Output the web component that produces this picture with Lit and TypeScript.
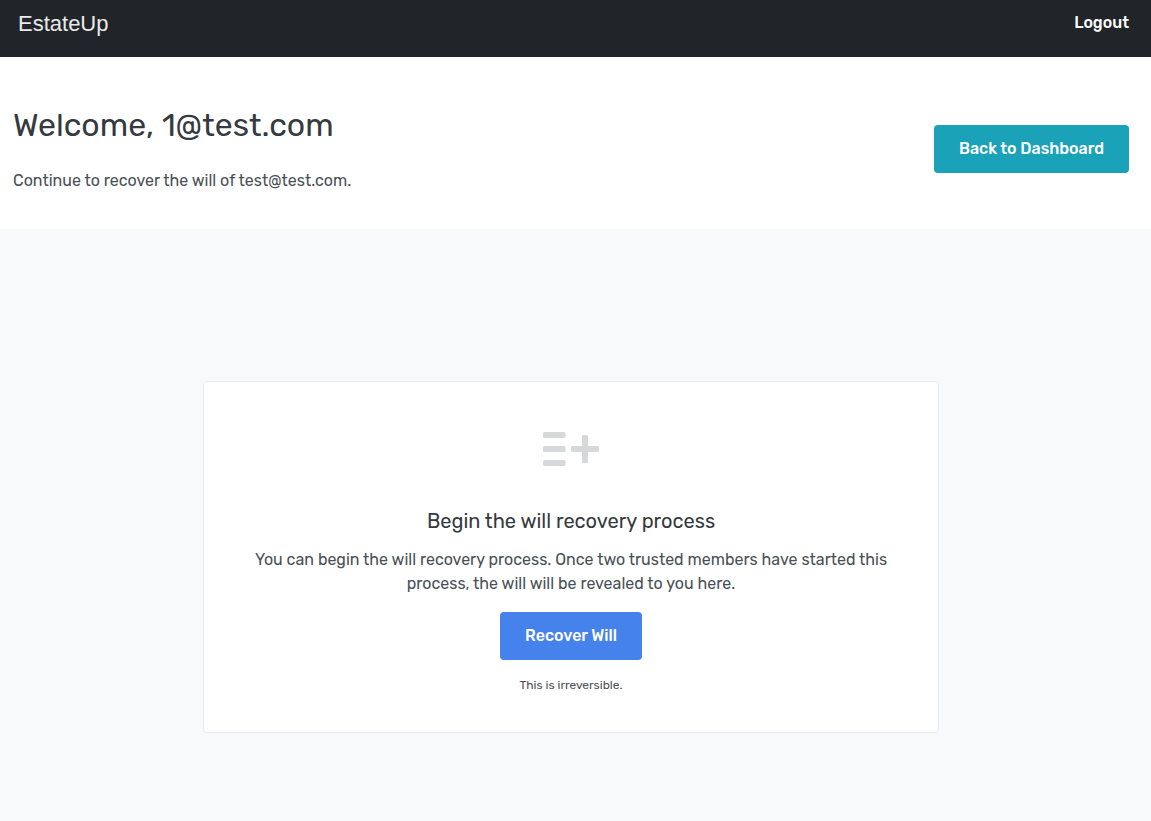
import { LitElement, html, css } from "lit";
import { customElement, property } from "lit/decorators.js";

@customElement("app-root")
export class AppRoot extends LitElement {
  @property() user = "1@test.com";
  @property() owner = "test@test.com";

  static styles = css`
    :host {
      display: flex;
      flex-direction: column;
      min-height: 100vh;
      background: #f8f9fb;
      color: #495057;
      font: 400 16px/24px Rubik, Inter, Roboto, sans-serif;
    }
    h1, h2, p { margin: 0; font-weight: 400; }
    .bar {
      display: flex;
      justify-content: space-between;
      align-items: flex-start;
      padding: 11px 22px 20px 18px;
      background: #212529;
    }
    .brand {
      color: #e9eaea;
      font: 400 22px/26px "Liberation Sans", Arial, sans-serif;
      text-decoration: none;
    }
    .logout { color: #fff; font-weight: 500; text-decoration: none; }
    .intro {
      display: flex;
      justify-content: space-between;
      align-items: center;
      gap: 24px;
      padding: 48px 22px 36px 13px;
      background: #fff;
    }
    .title {
      margin-bottom: 24px;
      color: #343a40;
      font-size: 32px;
      line-height: 40px;
    }
    .btn {
      padding: 12px 25px;
      border: 0;
      border-radius: 4px;
      color: #fff;
      font: inherit;
      font-weight: 500;
      cursor: pointer;
    }
    .teal { background: #19a2b8; }
    .blue { background: #4582ec; }
    .content { padding: 152px 22px 88px 13px; }
    .card {
      display: flex;
      flex-direction: column;
      align-items: center;
      box-sizing: border-box;
      max-width: 736px;
      margin: 0 auto;
      padding: 50px 48px 38px;
      border: 1px solid #e9ecef;
      border-radius: 4px;
      background: #fff;
      text-align: center;
    }
    .icon { display: block; margin-bottom: 40px; fill: #d6d8da; }
    .subtitle {
      margin-bottom: 12px;
      color: #343a40;
      font-size: 20px;
      line-height: 30px;
    }
    .text { margin-bottom: 16px; }
    .note { margin-top: 16px; font-size: 12px; line-height: 18px; }
  `;

  render() {
    return html`
      <header class="bar">
        <a class="brand" href="#">EstateUp</a>
        <a class="logout" href="#">Logout</a>
      </header>
      <section class="intro">
        <div>
          <h1 class="title">Welcome, ${this.user}</h1>
          <p>Continue to recover the will of ${this.owner}.</p>
        </div>
        <button class="btn teal" type="button">Back to Dashboard</button>
      </section>
      <main class="content">
        <section class="card">
          <svg class="icon" width="56" height="34" viewBox="0 0 56 34" aria-hidden="true">
            <rect width="22.5" height="6" rx="1.5" />
            <rect y="14" width="22.5" height="6" rx="1.5" />
            <rect y="28" width="22.5" height="6" rx="1.5" />
            <rect x="28" y="14" width="28" height="6" rx="1.5" />
            <rect x="39" y="3" width="6" height="28" rx="1.5" />
          </svg>
          <h2 class="subtitle">Begin the will recovery process</h2>
          <p class="text">
            You can begin the will recovery process. Once two trusted members
            have started this process, the will will be revealed to you here.
          </p>
          <button class="btn blue" type="button">Recover Will</button>
          <p class="note">This is irreversible.</p>
        </section>
      </main>
    `;
  }
}
